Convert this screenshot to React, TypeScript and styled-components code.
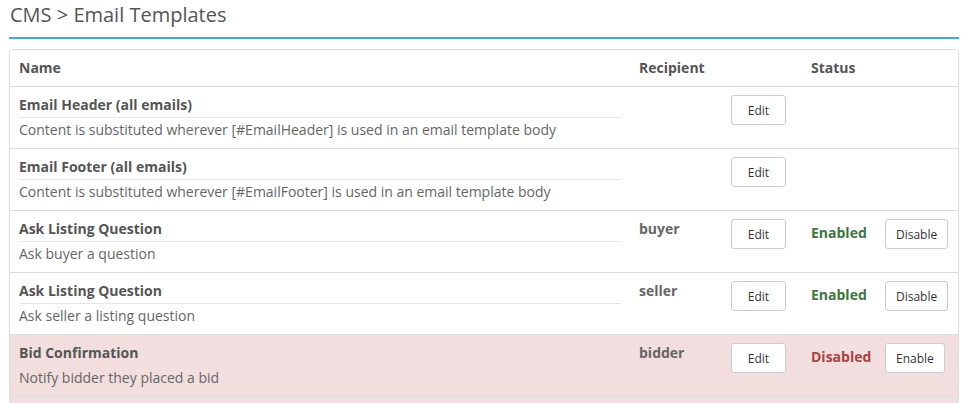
import React from "react";
import styled, { createGlobalStyle } from "styled-components";

const GlobalStyle = createGlobalStyle`
  body {
    margin: 0;
    background: #fff;
    font-family: "Open Sans", "Liberation Sans", sans-serif;
    font-size: 14px;
    color: #555;
  }
`;

const Page = styled.div`
  padding: 0 9px;
`;

const Heading = styled.h1`
  margin: 0;
  padding: 4px 0 11px 1px;
  font-size: 20px;
  font-weight: 400;
  line-height: 22px;
  color: #555;
  border-bottom: 2px solid #45a9d9;
`;

const Panel = styled.div`
  margin-top: 10px;
  border: 1px solid #ddd;
  border-radius: 4px;
  overflow: hidden;
`;

const Row = styled.div<{ $danger?: boolean }>`
  display: grid;
  grid-template-columns: 620px 92px 80px 74px 1fr;
  background: ${(p) => (p.$danger ? "#f2dede" : "#fff")};
  border-top: 1px solid #ddd;
  &:first-child {
    border-top: none;
  }
`;

const HeadCell = styled.div`
  padding: 8px 9px;
  line-height: 20px;
  font-weight: 700;
  color: #555;
`;

const Cell = styled.div<{ $center?: boolean }>`
  padding: 8px 9px;
  line-height: 20px;
  ${(p) => p.$center && "padding-top: 12px;"}
`;

const Title = styled.div`
  font-weight: 700;
  color: #555;
  padding-bottom: 2px;
  border-bottom: 1px solid #e6e6e6;
  margin-bottom: 2px;
`;

const Desc = styled.div`
  color: #666;
`;

const Recipient = styled.div`
  font-weight: 700;
  color: #666;
`;

const Button = styled.button`
  font-family: inherit;
  font-size: 12px;
  color: #333;
  background: #fff;
  border: 1px solid #ccc;
  border-radius: 3px;
  height: 30px;
  min-width: 55px;
  padding: 0 10px;
  cursor: pointer;
`;

const Status = styled.div<{ $on: boolean }>`
  font-weight: 700;
  color: ${(p) => (p.$on ? "#3c763d" : "#a94442")};
`;

type Template = {
  name: string;
  desc: string;
  recipient?: string;
  enabled?: boolean;
};

const templates: Template[] = [
  { name: "Email Header (all emails)", desc: "Content is substituted wherever [#EmailHeader] is used in an email template body" },
  { name: "Email Footer (all emails)", desc: "Content is substituted wherever [#EmailFooter] is used in an email template body" },
  { name: "Ask Listing Question", desc: "Ask buyer a question", recipient: "buyer", enabled: true },
  { name: "Ask Listing Question", desc: "Ask seller a listing question", recipient: "seller", enabled: true },
  { name: "Bid Confirmation", desc: "Notify bidder they placed a bid", recipient: "bidder", enabled: false },
  { name: "Bid Outbid Notice", desc: "Notify bidder they have been outbid", recipient: "bidder", enabled: false },
];

export default function App() {
  return (
    <Page>
      <GlobalStyle />
      <Heading>CMS &gt; Email Templates</Heading>
      <Panel>
        <Row>
          <HeadCell>Name</HeadCell>
          <HeadCell>Recipient</HeadCell>
          <HeadCell />
          <HeadCell>Status</HeadCell>
          <HeadCell />
        </Row>
        {templates.map((t, i) => (
          <Row key={i} $danger={t.enabled === false}>
            <Cell>
              <Title>{t.name}</Title>
              <Desc>{t.desc}</Desc>
            </Cell>
            <Cell>{t.recipient && <Recipient>{t.recipient}</Recipient>}</Cell>
            <Cell>
              <Button>Edit</Button>
            </Cell>
            <Cell $center>
              {t.enabled !== undefined && (
                <Status $on={t.enabled}>{t.enabled ? "Enabled" : "Disabled"}</Status>
              )}
            </Cell>
            <Cell>
              {t.enabled !== undefined && (
                <Button>{t.enabled ? "Disable" : "Enable"}</Button>
              )}
            </Cell>
          </Row>
        ))}
      </Panel>
    </Page>
  );
}
